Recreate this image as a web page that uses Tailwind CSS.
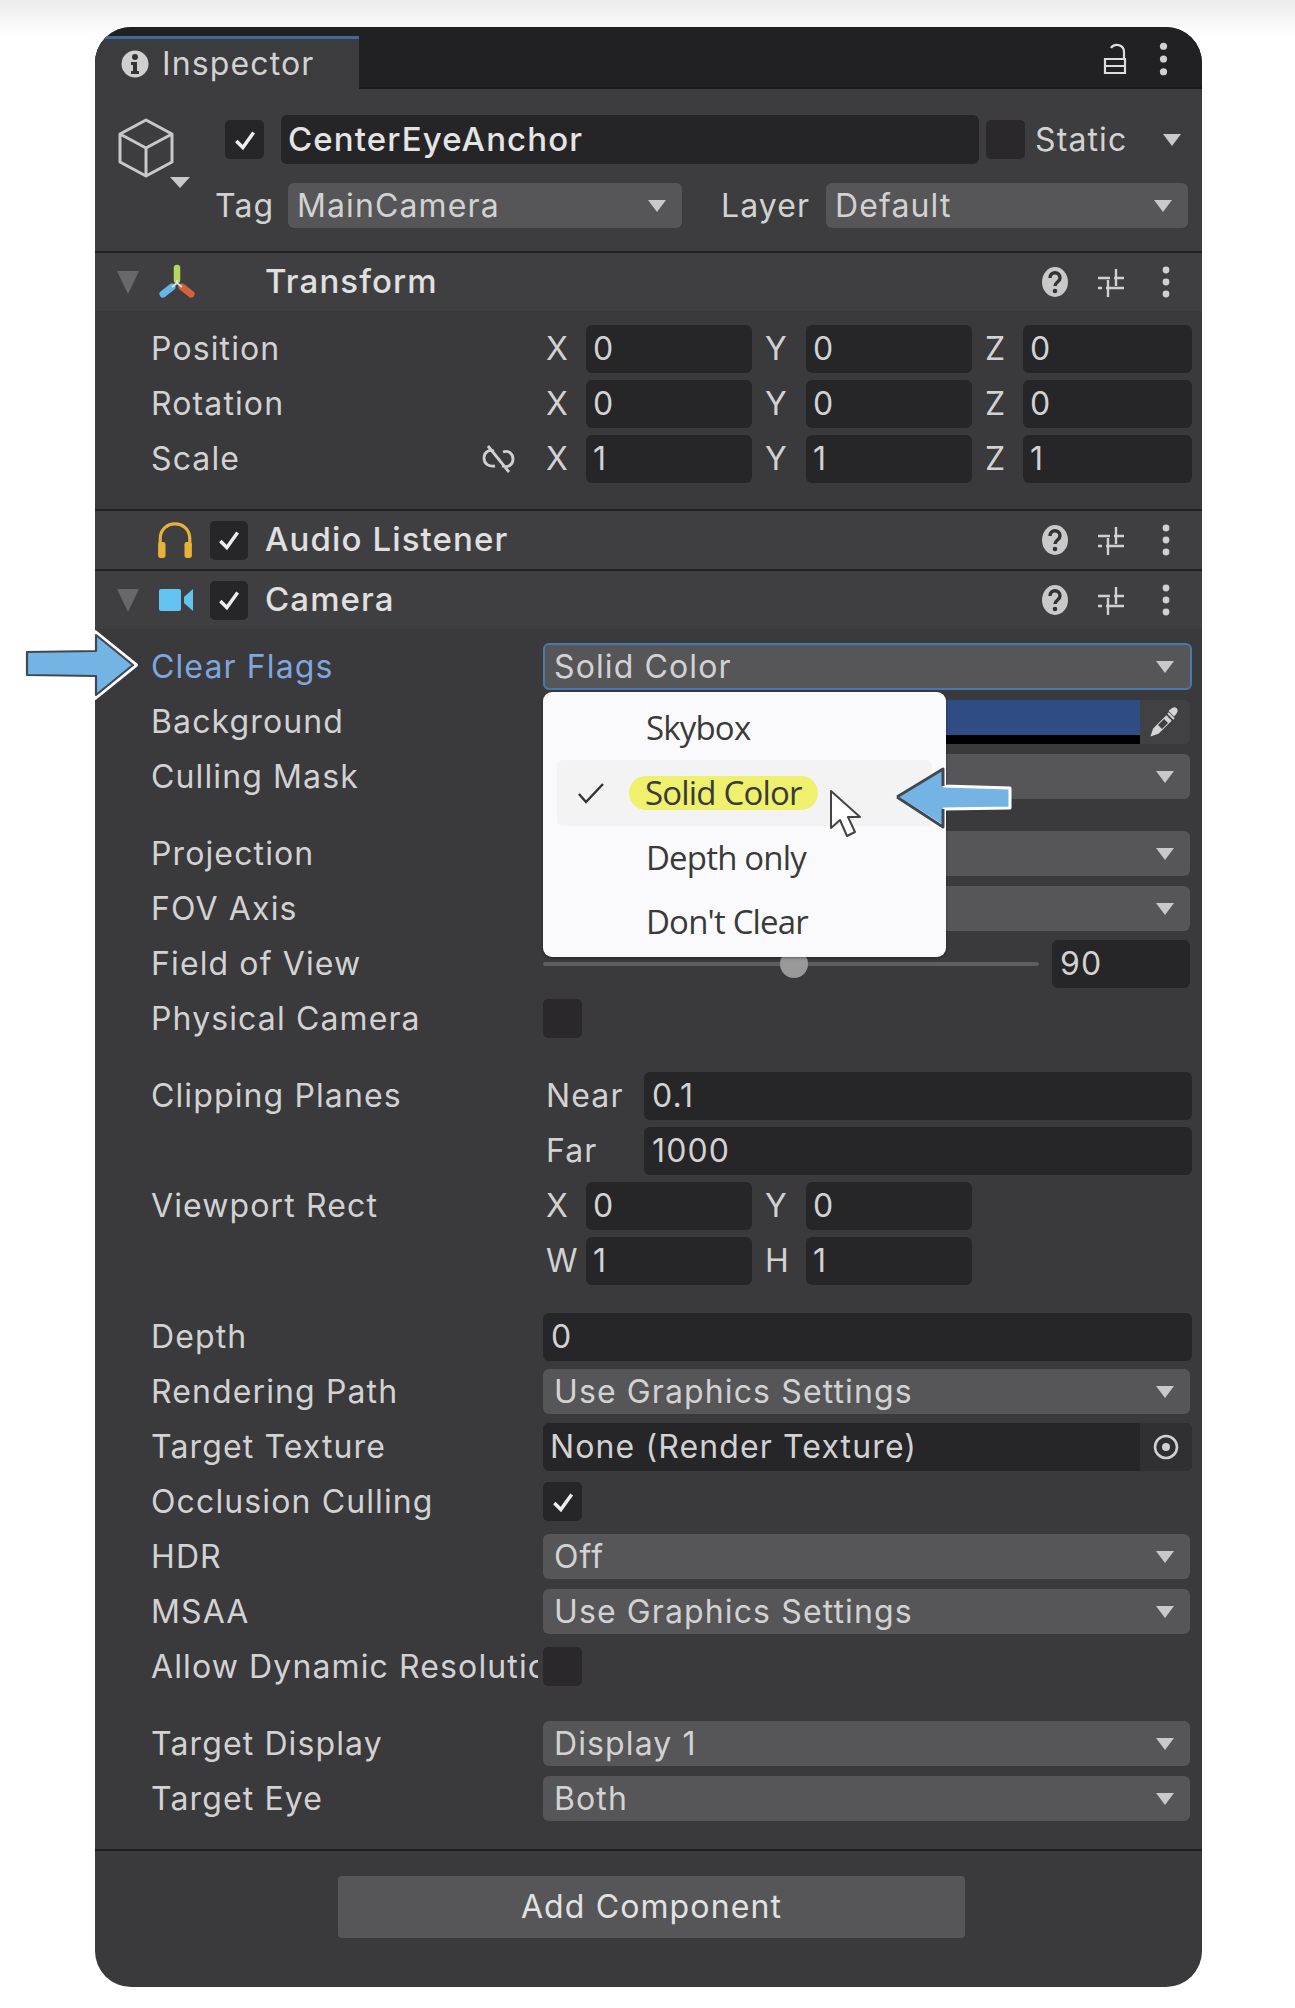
<!DOCTYPE html>
<html lang="en">
  <head>
    <meta charset="UTF-8" />
    <meta name="viewport" content="width=device-width, initial-scale=1.0" />
    <title>Inspector</title>
    <script src="https://cdn.jsdelivr.net/npm/@tailwindcss/browser@4"></script>
  </head>
  <body class="bg-white">
    <svg class="hidden">
      <symbol id="caret" viewBox="0 0 20 14"><path d="M1 1h18L10 13z" fill="#c9c9c9" /></symbol>
      <symbol id="fold" viewBox="0 0 22 24"><path d="M0 1h22L11 24z" fill="#68686a" /></symbol>
      <symbol id="check" viewBox="0 0 24 24"><path d="M4 13l6 6L20 5" fill="none" stroke="#eeeeee" stroke-width="3.2" /></symbol>
      <symbol id="dots" viewBox="0 0 8 32"><circle cx="4" cy="4" r="3.4" fill="#d0d0d0" /><circle cx="4" cy="16" r="3.4" fill="#d0d0d0" /><circle cx="4" cy="28" r="3.4" fill="#d0d0d0" /></symbol>
      <symbol id="sliders" viewBox="0 0 28 32"><path d="M1 12h12M17 12h10M19 3v17M1 22h4M9 22h18M11 14v17" fill="none" stroke="#d0d0d0" stroke-width="2.4" /></symbol>
      <symbol id="help" viewBox="0 0 28 32"><ellipse cx="14" cy="16" rx="13" ry="15" fill="#c9c9c9" /><path d="M9 12c0-7 10-7 10 0 0 4-5 4-5 8" fill="none" stroke="#333" stroke-width="3.4" /><circle cx="14" cy="25" r="2.3" fill="#333" /></symbol>
    </svg>

    <div class="relative h-[2008px] w-full overflow-hidden bg-[linear-gradient(to_bottom,#ececec_0px,#ffffff_36px)] pt-[27px] pl-[95px] font-['Inter',sans-serif] text-[32px] tracking-[0.035em] text-[#d2d2d2]">
      <!-- Inspector panel -->
      <div class="h-[1960px] w-[1107px] overflow-hidden rounded-[36px] bg-[#3a393c]">
        <!-- Tab bar -->
        <div class="flex h-[62px] items-start justify-between border-b-2 border-[#19191b] bg-[#212023] pr-[34px]">
          <div class="mt-[9px] flex h-[53px] w-[264px] items-center gap-[13px] border-t-[3px] border-[#3e6a98] bg-[#3c3c3e] pl-[26px]">
            <svg class="h-[28px] w-[28px] shrink-0" viewBox="0 0 28 28"><circle cx="14" cy="14" r="13.5" fill="#cfcfcf" /><circle cx="14" cy="7" r="3" fill="#333" /><path d="M10 12h6v9h2v3h-8v-3h2v-6h-2z" fill="#333" /></svg>
            <span class="text-[32px] leading-none">Inspector</span>
          </div>
          <div class="mt-[15px] flex items-center gap-[32px]">
            <svg class="h-[32px] w-[24px]" viewBox="0 0 24 32"><path d="M2 16h20v14H2zM2 23h20M21 16v-7c0-8-10-9-13-4" fill="none" stroke="#dddddd" stroke-width="2.2" /></svg>
            <svg class="h-[34px] w-[9px]"><use href="#dots" /></svg>
          </div>
        </div>

        <!-- GameObject header -->
        <div class="h-[162px] bg-[#3d3d3f] pt-[26px]">
          <div class="flex h-[49px] items-center">
            <div class="h-[49px] w-[130px] shrink-0 pl-[23px]">
              <svg class="block h-[70px] w-[72px] overflow-visible" viewBox="0 0 72 70"><path d="M28 5l26 14v28L28 61 2 47V19zM2 19l26 14 26-14M28 33v28" fill="none" stroke="#c8c8c8" stroke-width="3" stroke-linejoin="round" /><path d="M52 62h20l-10 11z" fill="#c9c9c9" /></svg>
            </div>
            <div class="flex h-[39px] w-[39px] shrink-0 items-center justify-center rounded-[5px] bg-[#262528]"><svg class="h-[26px] w-[26px]"><use href="#check" /></svg></div>
            <div class="ml-[17px] flex h-[49px] w-[698px] items-center rounded-[6px] bg-[#252427] pl-[7px] text-[33px] font-medium text-[#e4e4e4]">CenterEyeAnchor</div>
            <div class="ml-[7px] h-[39px] w-[39px] rounded-[5px] bg-[#2a282b]"></div>
            <span class="ml-[10px] w-[127px]">Static</span>
            <svg class="h-[14px] w-[20px]"><use href="#caret" /></svg>
          </div>
          <div class="mt-[19px] flex h-[45px] items-center pl-[120px]">
            <span class="w-[73px]">Tag</span>
            <div class="flex h-[45px] w-[394px] items-center justify-between rounded-[6px] bg-[#565658] pr-[15px] pl-[9px]">MainCamera<svg class="h-[14px] w-[20px]"><use href="#caret" /></svg></div>
            <span class="ml-[39px] w-[105px]">Layer</span>
            <div class="flex h-[45px] w-[362px] items-center justify-between rounded-[6px] bg-[#565658] pr-[15px] pl-[9px]">Default<svg class="h-[14px] w-[20px]"><use href="#caret" /></svg></div>
          </div>
        </div>

        <!-- Transform -->
        <div class="flex h-[60px] items-center border-t-2 border-[#212023] bg-[#3f3f41] pr-[32px] pl-[22px] text-[33px]">
          <svg class="h-[24px] w-[22px] shrink-0"><use href="#fold" /></svg>
          <svg class="ml-[18px] h-[36px] w-[40px]" viewBox="0 0 40 36"><path d="M20 4v12" stroke="#b6d65c" stroke-width="6.5" stroke-linecap="round" /><path d="M15 23L6 30" stroke="#66b7e6" stroke-width="7" stroke-linecap="round" /><path d="M25 23l9 7" stroke="#d2643c" stroke-width="7" stroke-linecap="round" /><path d="M20 16v3M15 23l5-4 5 4" fill="none" stroke="#dddddd" stroke-width="2" /></svg>
          <span class="ml-[28px] flex-1 pl-[40px] font-medium text-[#e0e0e0]">Transform</span>
          <svg class="h-[32px] w-[28px]"><use href="#help" /></svg>
          <svg class="ml-[28px] h-[32px] w-[28px]"><use href="#sliders" /></svg>
          <svg class="ml-[37px] h-[32px] w-[8px]"><use href="#dots" /></svg>
        </div>
        <div class="h-[198px] pt-[10px]">
          <div class="flex h-[55px] items-center pr-[10px] pl-[56px]">
            <span class="w-[393px]">Position</span>
            <span class="w-[42px] pl-[2px]">X</span><div class="flex h-[48px] w-[166px] items-center rounded-[6px] bg-[#262528] pl-[7px]">0</div>
            <span class="ml-[13px] w-[41px]">Y</span><div class="flex h-[48px] w-[166px] items-center rounded-[6px] bg-[#262528] pl-[7px]">0</div>
            <span class="ml-[13px] w-[38px]">Z</span><div class="flex h-[48px] w-[169px] items-center rounded-[6px] bg-[#262528] pl-[7px]">0</div>
          </div>
          <div class="flex h-[55px] items-center pr-[10px] pl-[56px]">
            <span class="w-[393px]">Rotation</span>
            <span class="w-[42px] pl-[2px]">X</span><div class="flex h-[48px] w-[166px] items-center rounded-[6px] bg-[#262528] pl-[7px]">0</div>
            <span class="ml-[13px] w-[41px]">Y</span><div class="flex h-[48px] w-[166px] items-center rounded-[6px] bg-[#262528] pl-[7px]">0</div>
            <span class="ml-[13px] w-[38px]">Z</span><div class="flex h-[48px] w-[169px] items-center rounded-[6px] bg-[#262528] pl-[7px]">0</div>
          </div>
          <div class="flex h-[55px] items-center pr-[10px] pl-[56px]">
            <span class="w-[331px]">Scale</span>
            <svg class="mr-[29px] h-[30px] w-[33px]" viewBox="0 0 33 30"><path d="M12 7c-6-2-10 2-10 7 0 6 5 9 11 8M21 8c6-2 10 2 10 7 0 6-5 9-11 7M6 2l21 26" fill="none" stroke="#d0d0d0" stroke-width="2.8" /></svg>
            <span class="w-[42px] pl-[2px]">X</span><div class="flex h-[48px] w-[166px] items-center rounded-[6px] bg-[#262528] pl-[7px]">1</div>
            <span class="ml-[13px] w-[41px]">Y</span><div class="flex h-[48px] w-[166px] items-center rounded-[6px] bg-[#262528] pl-[7px]">1</div>
            <span class="ml-[13px] w-[38px]">Z</span><div class="flex h-[48px] w-[169px] items-center rounded-[6px] bg-[#262528] pl-[7px]">1</div>
          </div>
        </div>

        <!-- Audio Listener -->
        <div class="flex h-[60px] items-center border-t-2 border-[#212023] bg-[#3f3f41] pr-[32px] pl-[61px] text-[33px]">
          <svg class="h-[38px] w-[38px]" viewBox="0 0 36 36"><path d="M4 24V17C4 -2 32 -2 32 17v7" fill="none" stroke="#e8b23a" stroke-width="3" /><rect x="2" y="20" width="7" height="15" rx="2" fill="#e8b23a" /><rect x="27" y="20" width="7" height="15" rx="2" fill="#e8b23a" /></svg>
          <div class="ml-[16px] flex h-[39px] w-[38px] items-center justify-center rounded-[5px] bg-[#262528]"><svg class="h-[26px] w-[26px]"><use href="#check" /></svg></div>
          <span class="ml-[17px] flex-1 font-medium text-[#e0e0e0]">Audio Listener</span>
          <svg class="h-[32px] w-[28px]"><use href="#help" /></svg>
          <svg class="ml-[28px] h-[32px] w-[28px]"><use href="#sliders" /></svg>
          <svg class="ml-[37px] h-[32px] w-[8px]"><use href="#dots" /></svg>
        </div>

        <!-- Camera -->
        <div class="flex h-[60px] items-center border-t-2 border-[#212023] bg-[#3f3f41] pr-[32px] pl-[22px] text-[33px]">
          <svg class="h-[24px] w-[22px] shrink-0"><use href="#fold" /></svg>
          <svg class="ml-[19px] h-[26px] w-[36px]" viewBox="0 0 36 26"><rect x="1" y="2" width="22" height="22" rx="2" fill="#63c4f2" /><path d="M26 10l9-8v22l-9-8z" fill="#63c4f2" /></svg>
          <div class="ml-[16px] flex h-[39px] w-[38px] items-center justify-center rounded-[5px] bg-[#262528]"><svg class="h-[26px] w-[26px]"><use href="#check" /></svg></div>
          <span class="ml-[17px] flex-1 font-medium text-[#e0e0e0]">Camera</span>
          <svg class="h-[32px] w-[28px]"><use href="#help" /></svg>
          <svg class="ml-[28px] h-[32px] w-[28px]"><use href="#sliders" /></svg>
          <svg class="ml-[37px] h-[32px] w-[8px]"><use href="#dots" /></svg>
        </div>

        <div class="pt-[10px]">
          <div class="flex h-[55px] items-center pr-[10px] pl-[56px]">
            <span class="w-[392px] text-[#7ea6df]">Clear Flags</span>
            <div class="flex h-[47px] flex-1 items-center justify-between rounded-[6px] border-2 border-[#4a78ad] bg-[#565658] pr-[15px] pl-[9px]">Solid Color<svg class="h-[14px] w-[20px]"><use href="#caret" /></svg></div>
          </div>
          <div class="flex h-[55px] items-center pr-[12px] pl-[56px]">
            <span class="w-[392px]">Background</span>
            <div class="flex h-[44px] flex-1 overflow-hidden rounded-[6px] bg-[#414143]">
              <div class="flex-1 border-b-[9px] border-black bg-[#2f4c85]"></div>
              <div class="flex w-[50px] items-center justify-center">
                <svg class="h-[30px] w-[30px]" viewBox="0 0 30 30"><path d="M18 6L24 12M20 4c3-3 5-3 6-2s1 3-2 6zM17 9l-13 13-2 6 6-2 13-13" fill="#d4d4d4" stroke="#d4d4d4" stroke-width="2" /><path d="M8 18l6-6 4 4-6 6z" fill="#414143" /></svg>
              </div>
            </div>
          </div>
          <div class="flex h-[55px] items-center pr-[12px] pl-[56px]">
            <span class="w-[392px]">Culling Mask</span>
            <div class="flex h-[45px] flex-1 items-center justify-end rounded-[6px] bg-[#565658] pr-[15px]"><svg class="h-[14px] w-[20px]"><use href="#caret" /></svg></div>
          </div>

          <div class="mt-[22px] flex h-[55px] items-center pr-[12px] pl-[56px]">
            <span class="w-[392px]">Projection</span>
            <div class="flex h-[45px] flex-1 items-center justify-end rounded-[6px] bg-[#565658] pr-[15px]"><svg class="h-[14px] w-[20px]"><use href="#caret" /></svg></div>
          </div>
          <div class="flex h-[55px] items-center pr-[12px] pl-[56px]">
            <span class="w-[392px]">FOV Axis</span>
            <div class="flex h-[45px] flex-1 items-center justify-end rounded-[6px] bg-[#565658] pr-[15px]"><svg class="h-[14px] w-[20px]"><use href="#caret" /></svg></div>
          </div>
          <div class="flex h-[55px] items-center pr-[12px] pl-[56px]">
            <span class="w-[392px]">Field of View</span>
            <div class="relative h-[4px] w-[496px] rounded-full bg-[#5e5e60]">
              <div class="absolute top-[-12px] left-[237px] h-[28px] w-[28px] rounded-full bg-[#999999]"></div>
            </div>
            <div class="ml-[13px] flex h-[48px] flex-1 items-center rounded-[6px] bg-[#262528] pl-[8px]">90</div>
          </div>
          <div class="flex h-[55px] items-center pr-[10px] pl-[56px]">
            <span class="w-[392px]">Physical Camera</span>
            <div class="h-[39px] w-[39px] rounded-[5px] bg-[#2a282b]"></div>
          </div>

          <div class="mt-[22px] flex h-[55px] items-center pr-[10px] pl-[56px]">
            <span class="w-[393px]">Clipping Planes</span>
            <span class="w-[100px] pl-[2px]">Near</span><div class="flex h-[48px] flex-1 items-center rounded-[6px] bg-[#262528] pl-[8px]">0.1</div>
          </div>
          <div class="flex h-[55px] items-center pr-[10px] pl-[56px]">
            <span class="w-[393px]"></span>
            <span class="w-[100px] pl-[2px]">Far</span><div class="flex h-[48px] flex-1 items-center rounded-[6px] bg-[#262528] pl-[8px]">1000</div>
          </div>
          <div class="flex h-[55px] items-center pr-[10px] pl-[56px]">
            <span class="w-[393px]">Viewport Rect</span>
            <span class="w-[42px] pl-[2px]">X</span><div class="flex h-[48px] w-[166px] items-center rounded-[6px] bg-[#262528] pl-[7px]">0</div>
            <span class="ml-[13px] w-[41px]">Y</span><div class="flex h-[48px] w-[166px] items-center rounded-[6px] bg-[#262528] pl-[7px]">0</div>
          </div>
          <div class="flex h-[55px] items-center pr-[10px] pl-[56px]">
            <span class="w-[393px]"></span>
            <span class="w-[42px] pl-[2px]">W</span><div class="flex h-[48px] w-[166px] items-center rounded-[6px] bg-[#262528] pl-[7px]">1</div>
            <span class="ml-[13px] w-[41px]">H</span><div class="flex h-[48px] w-[166px] items-center rounded-[6px] bg-[#262528] pl-[7px]">1</div>
          </div>

          <div class="mt-[21px] flex h-[55px] items-center pr-[10px] pl-[56px]">
            <span class="w-[392px]">Depth</span>
            <div class="flex h-[48px] flex-1 items-center rounded-[6px] bg-[#262528] pl-[8px]">0</div>
          </div>
          <div class="flex h-[55px] items-center pr-[12px] pl-[56px]">
            <span class="w-[392px]">Rendering Path</span>
            <div class="flex h-[45px] flex-1 items-center justify-between rounded-[6px] bg-[#565658] pr-[15px] pl-[11px]">Use Graphics Settings<svg class="h-[14px] w-[20px]"><use href="#caret" /></svg></div>
          </div>
          <div class="flex h-[55px] items-center pr-[10px] pl-[56px]">
            <span class="w-[392px]">Target Texture</span>
            <div class="flex h-[48px] flex-1 items-center justify-between overflow-hidden rounded-[6px] bg-[#262528] pl-[7px]">None (Render Texture)
              <div class="flex h-full w-[52px] items-center justify-center bg-[#303033]">
                <svg class="h-[28px] w-[28px]" viewBox="0 0 28 28"><circle cx="14" cy="14" r="11" fill="none" stroke="#d0d0d0" stroke-width="2.6" /><circle cx="14" cy="14" r="4" fill="#d0d0d0" /></svg>
              </div>
            </div>
          </div>
          <div class="flex h-[55px] items-center pr-[10px] pl-[56px]">
            <span class="w-[392px]">Occlusion Culling</span>
            <div class="flex h-[39px] w-[39px] items-center justify-center rounded-[5px] bg-[#262528]"><svg class="h-[26px] w-[26px]"><use href="#check" /></svg></div>
          </div>
          <div class="flex h-[55px] items-center pr-[12px] pl-[56px]">
            <span class="w-[392px]">HDR</span>
            <div class="flex h-[45px] flex-1 items-center justify-between rounded-[6px] bg-[#565658] pr-[15px] pl-[11px]">Off<svg class="h-[14px] w-[20px]"><use href="#caret" /></svg></div>
          </div>
          <div class="flex h-[55px] items-center pr-[12px] pl-[56px]">
            <span class="w-[392px]">MSAA</span>
            <div class="flex h-[45px] flex-1 items-center justify-between rounded-[6px] bg-[#565658] pr-[15px] pl-[11px]">Use Graphics Settings<svg class="h-[14px] w-[20px]"><use href="#caret" /></svg></div>
          </div>
          <div class="flex h-[55px] items-center pr-[10px] pl-[56px]">
            <span class="mr-[5px] w-[387px] overflow-hidden whitespace-nowrap">Allow Dynamic Resolution</span>
            <div class="h-[39px] w-[39px] rounded-[5px] bg-[#2a282b]"></div>
          </div>

          <div class="mt-[22px] flex h-[55px] items-center pr-[12px] pl-[56px]">
            <span class="w-[392px]">Target Display</span>
            <div class="flex h-[45px] flex-1 items-center justify-between rounded-[6px] bg-[#565658] pr-[15px] pl-[11px]">Display 1<svg class="h-[14px] w-[20px]"><use href="#caret" /></svg></div>
          </div>
          <div class="flex h-[55px] items-center pr-[12px] pl-[56px]">
            <span class="w-[392px]">Target Eye</span>
            <div class="flex h-[45px] flex-1 items-center justify-between rounded-[6px] bg-[#565658] pr-[15px] pl-[11px]">Both<svg class="h-[14px] w-[20px]"><use href="#caret" /></svg></div>
          </div>
        </div>

        <!-- Add Component -->
        <div class="mt-[23px] border-t-2 border-[#1f1f21] pt-[25px]">
          <div class="ml-[243px] flex h-[62px] w-[627px] items-center justify-center rounded-[4px] bg-[#565658] text-[#e2e2e2]">Add Component</div>
        </div>
      </div>

      <!-- Dropdown popup -->
      <div class="absolute top-[692px] left-[543px] h-[265px] w-[403px] rounded-[9px] bg-[#fafafc] pt-[4px] font-['Open_Sans',sans-serif] text-[33px] tracking-[-0.025em] text-[#3a3a3a] shadow-[0_1px_3px_rgba(0,0,0,0.4)]">
        <div class="flex h-[64px] items-center pl-[103px]">Skybox</div>
        <div class="mx-[14px] flex h-[66px] items-center rounded-[6px] bg-[#f3f3f4]">
          <svg class="ml-[20px] h-[24px] w-[28px]" viewBox="0 0 28 24"><path d="M2 13l7 8L26 3" fill="none" stroke="#333" stroke-width="2.4" /></svg>
          <span class="ml-[24px] rounded-full bg-[#eef06e] px-[16px] leading-[34px]">Solid Color</span>
        </div>
        <div class="flex h-[64px] items-center pl-[103px]">Depth only</div>
        <div class="flex h-[64px] items-center pl-[103px]">Don't Clear</div>
      </div>

      <!-- Mouse cursor -->
      <svg class="absolute top-[789px] left-[829px] h-[50px] w-[33px]" viewBox="0 0 33 50"><path d="M2 2v37l9-8 7 16 8-4-7-15h12z" fill="#ffffff" stroke="#444" stroke-width="2" stroke-linejoin="round" /></svg>

      <!-- Callout arrows -->
      <svg class="absolute top-[630px] left-[23px] h-[70px] w-[115px]" viewBox="0 0 115 70"><path d="M2 22l70-1V2l41 33-41 33V48L2 47z" fill="#74b4e4" stroke="#ffffff" stroke-width="4" stroke-linejoin="round" /><path d="M4 22l69-1V5l37 30-37 30V46L4 45z" fill="#74b4e4" stroke="#3d4a55" stroke-width="2.2" stroke-linejoin="round" /></svg>
      <svg class="absolute top-[766px] left-[894px] h-[63px] w-[118px]" viewBox="0 0 118 63"><path d="M3 31L50 2v18l66 2v20l-66 1v18z" fill="#74b4e4" stroke="#ffffff" stroke-width="3" stroke-linejoin="round" /><path d="M3 31L49 3v17M3 31l46 30V43" fill="none" stroke="#3d4a55" stroke-width="3" stroke-linejoin="round" /></svg>
    </div>
  </body>
</html>
